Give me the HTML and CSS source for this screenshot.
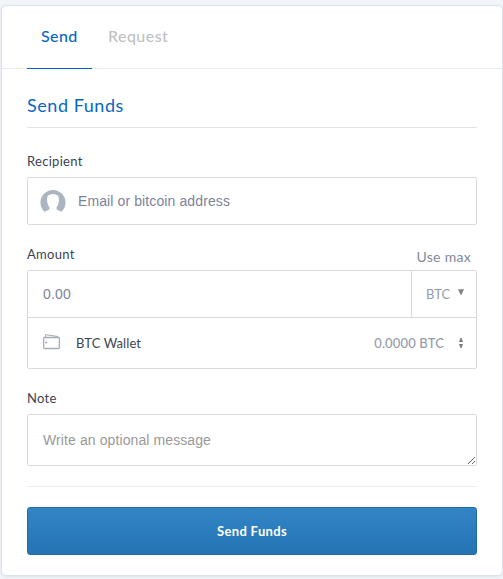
FILE: index.html
```html
<!DOCTYPE html>
<html lang="en">
<head>
<meta charset="utf-8">
<title>Send Funds</title>
<link rel="stylesheet" href="styles.css">
</head>
<body>
<main class="card">
  <nav class="tabs">
    <a class="tab tab-active"><span>Send</span></a>
    <a class="tab tab-request"><span>Request</span></a>
  </nav>
  <form class="content">
    <h1 class="title"><span>Send Funds</span></h1>
    <div class="label label-recipient"><span>Recipient</span></div>
    <div class="field recipient">
      <svg class="avatar" width="26" height="24" viewBox="0 0 26 24"><path fill="#acb5bf" d="M4.600 22.800A12.500 12.500 0 1 1 21.400 22.800L16.600 20.500V18C18.800 15.500 19.400 11 18.600 7.800C17.400 4.200 8.600 4.200 7.400 7.800C6.600 11 7.200 15.500 9.400 18V20.500Z"/></svg>
      <span class="placeholder email">Email or bitcoin address</span>
    </div>
    <div class="label label-amount"><span class="amount-label">Amount</span><a class="use-max">Use max</a></div>
    <div class="amount-box">
      <div class="amount-row">
        <span class="placeholder amount">0.00</span>
        <div class="currency"><span class="btc">BTC</span><svg width="6" height="6" viewBox="0 0 6 6"><path fill="#808388" d="M0 .3H6L3.500 5.700H2.500Z"/></svg></div>
      </div>
      <div class="wallet-row">
        <svg class="wallet-icon" width="18" height="16" viewBox="0 0 18 16"><g fill="none" stroke="#a5acb5"><path stroke-width="1.100" d="M2.500 3.500V1.300Q2.500.7 3.200.8L14.500 2.500V3.500"/><rect x=".6" y="3.500" width="15.800" height="11" rx="1" stroke-width="1.300"/></g><circle cx="3.200" cy="8.500" r="1.100" fill="#a5acb5"/></svg>
        <span class="wallet-name">BTC Wallet</span>
        <span class="balance">0.0000 BTC</span>
        <svg class="sort" width="4" height="10" viewBox="0 0 4 10"><path fill="#777c83" d="M0 4L1.500 0H2.500L4 4ZM0 6H4L2.500 10H1.500Z"/></svg>
      </div>
    </div>
    <div class="label label-note"><span>Note</span></div>
    <textarea class="note" placeholder="Write an optional message"></textarea>
    <hr class="divider">
    <button class="submit" type="button"><span>Send Funds</span></button>
  </form>
</main>
</body>
</html>
```
FILE: styles.css
```css
* { box-sizing: border-box; }
body {
  margin: 0;
  padding: 5px 0 3px 1px;
  height: 579px;
  overflow: hidden;
  background: #f1f5f9;
  font-family: Lato, "Liberation Sans", sans-serif;
}
.card {
  height: 571px;
  background: #fff;
  border: 1px solid #dae1e9;
  border-radius: 5px;
  box-shadow: 0 1px 3px rgba(90, 120, 150, .12);
}
.tabs {
  display: flex;
  height: 63px;
  padding-left: 25px;
  border-bottom: 1px solid #e8eaed;
}
.tab {
  height: 63px;
  padding: 19px 0 0 14px;
  font-size: 16px;
  line-height: 22px;
  font-weight: 500;
  color: #c0c1c3;
}
.tab-active {
  width: 65px;
  color: #0667c6;
  border-bottom: 1px solid #0667d0;
  letter-spacing: .4px;
}
.tab-request { padding-left: 16px; letter-spacing: .45px; }
.content { padding: 0 25px; }
.title {
  height: 59px;
  margin: 0;
  padding-top: 24px;
  border-bottom: 1px solid #e2e3e5;
  color: #0667c6;
  font-size: 18px;
  line-height: 24px;
  font-weight: 400;
  letter-spacing: .55px;
}
.label {
  display: flex;
  justify-content: space-between;
  color: #3d4350;
  font-size: 13px;
  line-height: 18px;
  letter-spacing: .3px;
}
.label-recipient { height: 49px; padding-top: 24px; }
.label-amount { height: 45px; padding-top: 20px; }
.label-note { height: 45px; padding-top: 20px; }
.use-max {
  padding: 3px 6px 0 0;
  font-size: 14px;
  color: #828995;
}
.field, .amount-box { border: 1px solid #d9dadc; border-radius: 2px; }
.recipient {
  display: flex;
  align-items: center;
  height: 48px;
  padding-left: 12px;
}
.avatar { margin-right: 12px; }
.placeholder {
  color: #7c839b;
  font: 14px/20px "Liberation Sans", sans-serif;
}
.email { letter-spacing: .11px; }
.amount-box { height: 99px; }
.amount-row {
  display: flex;
  align-items: center;
  height: 47px;
  border-bottom: 1px solid #d9dadc;
}
.amount { flex: 1; padding-left: 15px; letter-spacing: .2px; }
.currency {
  display: flex;
  align-items: center;
  width: 65px;
  height: 46px;
  border-left: 1px solid #d9dadc;
  padding-left: 14px;
  color: #949cac;
  font-size: 13px;
}
.currency svg { margin: -5px 0 0 8px; }
.wallet-row {
  display: flex;
  align-items: center;
  height: 50px;
  padding: 0 13px 0 15px;
  font-size: 13px;
}
.wallet-icon { margin-top: -2px; }
.wallet-name { margin-left: 15px; color: #3d4350; letter-spacing: .1px; }
.balance { margin-left: auto; color: #949cac; font-weight: 500; letter-spacing: .15px; }
.sort { margin-left: 15px; }
.note {
  display: block;
  width: 100%;
  height: 52px;
  margin: 0;
  padding: 15px;
  border: 1px solid #d9dadc;
  border-radius: 2px;
  outline: none;
  overflow: hidden;
  font: 14px/20px "Liberation Sans", sans-serif;
  letter-spacing: .1px;
}
.note::placeholder { color: #999; }
.divider { height: 1px; margin: 20px 0; border: 0; background: #ebecee; }
.submit {
  display: block;
  width: 100%;
  height: 48px;
  padding: 0;
  border: 1px solid #2468a5;
  border-radius: 3px;
  background: linear-gradient(#3285c5, #2474b4);
  color: #fff;
  font: 700 13px/18px Lato, "Liberation Sans", sans-serif;
  letter-spacing: .35px;
}
```
